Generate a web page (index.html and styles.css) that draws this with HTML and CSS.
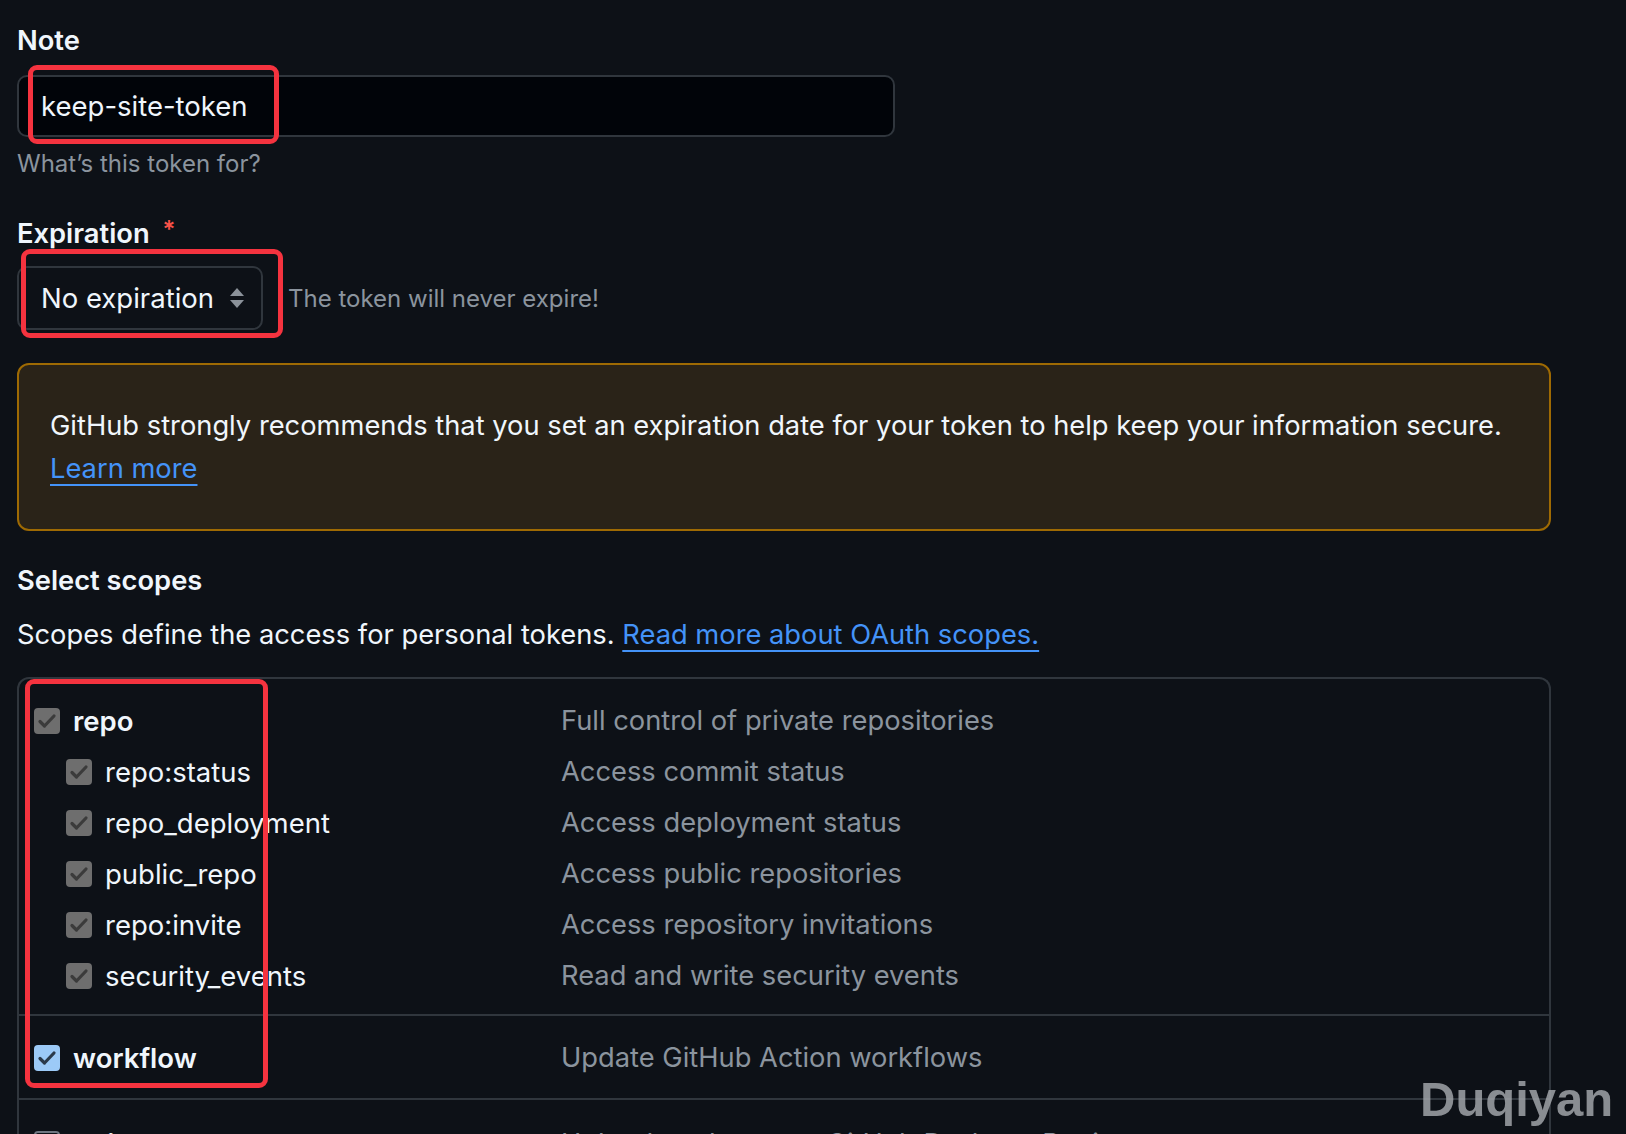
FILE: index.html
```html
<!DOCTYPE html>
<html lang="en">
<head>
<meta charset="utf-8">
<title>New personal access token</title>
<link rel="stylesheet" href="styles.css">
</head>
<body>
<main class="page">
  <section class="field note-field">
    <label class="field-label">Note</label>
    <div class="input-wrap">
      <div class="text-input">keep-site-token</div>
      <span class="mark mark-note"></span>
    </div>
    <p class="hint">What’s this token for?</p>
  </section>

  <section class="field exp-field">
    <label class="field-label">Expiration <span class="req">*</span></label>
    <div class="exp-row">
      <div class="select-wrap">
        <div class="select">
          <span>No expiration</span>
          <svg class="updown" width="16" height="24" viewBox="0 0 16 24"><path d="M8 2 L15 10 H1 Z M8 22 L15 14 H1 Z" fill="#8b929a"/></svg>
        </div>
        <span class="mark mark-exp"></span>
      </div>
      <span class="exp-note">The token will never expire!</span>
    </div>
  </section>

  <div class="warning">
    <p>GitHub strongly recommends that you set an expiration date for your token to help keep your information secure.</p>
    <a class="link" href="#">Learn more</a>
  </div>

  <h3 class="section-title">Select scopes</h3>
  <p class="scopes-intro">Scopes define the access for personal tokens. <a class="link" href="#">Read more about OAuth scopes.</a></p>

  <div class="scopes">
    <div class="group">
      <div class="row parent">
        <span class="name"><span class="cb cb-gray"><svg viewBox="0 0 26 26"><path d="M6 13.5 L10.5 18 L20 8" /></svg></span><b>repo</b></span>
        <span class="desc">Full control of private repositories</span>
      </div>
      <div class="row child">
        <span class="name"><span class="cb cb-gray"><svg viewBox="0 0 26 26"><path d="M6 13.5 L10.5 18 L20 8" /></svg></span>repo:status</span>
        <span class="desc">Access commit status</span>
      </div>
      <div class="row child">
        <span class="name"><span class="cb cb-gray"><svg viewBox="0 0 26 26"><path d="M6 13.5 L10.5 18 L20 8" /></svg></span>repo_deployment</span>
        <span class="desc">Access deployment status</span>
      </div>
      <div class="row child">
        <span class="name"><span class="cb cb-gray"><svg viewBox="0 0 26 26"><path d="M6 13.5 L10.5 18 L20 8" /></svg></span>public_repo</span>
        <span class="desc">Access public repositories</span>
      </div>
      <div class="row child">
        <span class="name"><span class="cb cb-gray"><svg viewBox="0 0 26 26"><path d="M6 13.5 L10.5 18 L20 8" /></svg></span>repo:invite</span>
        <span class="desc">Access repository invitations</span>
      </div>
      <div class="row child">
        <span class="name"><span class="cb cb-gray"><svg viewBox="0 0 26 26"><path d="M6 13.5 L10.5 18 L20 8" /></svg></span>security_events</span>
        <span class="desc">Read and write security events</span>
      </div>
    </div>
    <div class="group group-workflow">
      <div class="row parent">
        <span class="name"><span class="cb cb-blue"><svg viewBox="0 0 26 26"><path d="M6 13.5 L10.5 18 L20 8" /></svg></span><b>workflow</b></span>
        <span class="desc">Update GitHub Action workflows</span>
      </div>
    </div>
    <div class="group group-packages">
      <div class="row parent">
        <span class="name"><span class="cb cb-empty"></span><b>write:packages</b></span>
        <span class="desc">Upload packages to GitHub Package Registry</span>
      </div>
    </div>
    <span class="mark mark-scopes"></span>
  </div>
</main>
<div class="watermark">Duqiyan</div>
</body>
</html>
```

FILE: styles.css
```css
* { box-sizing: border-box; }
html, body { margin: 0; padding: 0; }
body {
  background: #0d1117;
  color: #e6edf3;
  font-family: Inter, "Noto Sans", sans-serif;
  font-size: 27.3px;
  overflow: hidden;
  height: 1134px;
  position: relative;
}
.page {
  padding: 24px 0 0 17px;
  width: 1551px;
}
.field-label {
  display: block;
  font-weight: 600;
  font-size: 27.3px;
  line-height: 34px;
  color: #f0f6fc;
}
.req { color: #f85149; margin-left: 6px; font-size: 24px; vertical-align: 5px; }
.input-wrap {
  position: relative;
  margin-top: 17px;
  width: 878px;
}
.text-input {
  height: 62px;
  background: #010409;
  border: 2px solid #30363d;
  border-radius: 10px;
  padding: 0 0 0 22px;
  display: flex;
  align-items: center;
  font-size: 27.5px;
  color: #f0f6fc;
}
.mark {
  position: absolute;
  border: 5px solid #f5333f;
  border-radius: 9px;
  pointer-events: none;
}
.mark-note { left: 11px; top: -10px; width: 251px; height: 79px; }
.hint {
  margin: 12px 0 0;
  font-size: 24px;
  line-height: 30px;
  color: #8b949e;
}
.exp-field { margin-top: 34px; }
.exp-row {
  display: flex;
  align-items: center;
  margin-top: 15px;
  gap: 25px;
}
.select-wrap { position: relative; }
.select {
  width: 246px;
  height: 64px;
  border: 2px solid #30363d;
  border-radius: 10px;
  background: #0d1117;
  display: flex;
  align-items: center;
  justify-content: space-between;
  padding: 0 16px 0 22px;
  font-size: 27.5px;
  color: #f0f6fc;
}
.updown { display: block; }
.mark-exp { left: 4px; top: -17px; width: 262px; height: 89px; }
.exp-note { font-size: 24px; color: #8b949e; }
.warning {
  margin-top: 33px;
  height: 168px;
  background: #2a2318;
  border: 2px solid #9e6a03;
  border-radius: 12px;
  padding: 39px 31px 0;
  font-size: 27.3px;
  line-height: 43px;
  color: #f0f6fc;
}
.warning p { margin: 0; }
.link { color: #4493f8; text-decoration: underline; text-underline-offset: 6px; text-decoration-thickness: 2px; }
.section-title {
  margin: 32px 0 0;
  font-size: 27.3px;
  font-weight: 600;
  line-height: 36px;
  color: #f0f6fc;
}
.scopes-intro {
  margin: 18px 0 0;
  font-size: 27.3px;
  line-height: 36px;
  color: #f0f6fc;
}
.scopes {
  position: relative;
  margin-top: 24px;
  border: 2px solid #30363d;
  border-bottom: 0;
  border-radius: 12px 12px 0 0;
  height: 500px;
}
.group {
  padding: 16px 0 13px;
  border-bottom: 2px solid #30363d;
}
.group-workflow { padding: 16px 0 15px; }
.group-packages { padding-top: 18px; }
.row {
  display: grid;
  grid-template-columns: 527px 1fr;
  height: 51px;
  align-items: center;
  padding-left: 15px;
  font-size: 27.5px;
}
.name { display: flex; align-items: center; color: #f0f6fc; }
.name b { font-weight: 600; }
.child .name { padding-left: 32px; }
.cb {
  width: 26px;
  height: 26px;
  border-radius: 4px;
  margin-right: 13px;
  flex: none;
  display: block;
}
.cb svg { width: 26px; height: 26px; display: block; }
.cb svg path { fill: none; stroke: #3b3b3b; stroke-width: 3.2; stroke-linecap: round; stroke-linejoin: round; }
.cb-gray { background: #6e6e6e; }
.cb-blue { background: #9ccaf7; }
.cb-blue svg path { stroke: #2b3a4a; }
.cb-empty { background: #0d1117; border: 2px solid #6e7681; }
.desc { color: #8b949e; font-size: 27.3px; }
.mark-scopes { left: 6px; top: 0px; width: 243px; height: 409px; }
.watermark {
  position: absolute;
  left: 1420px;
  top: 1071px;
  font-family: "Liberation Sans", Arial, sans-serif;
  font-weight: 700;
  font-size: 49px;
  color: rgba(160, 163, 168, 0.85);
}
```
